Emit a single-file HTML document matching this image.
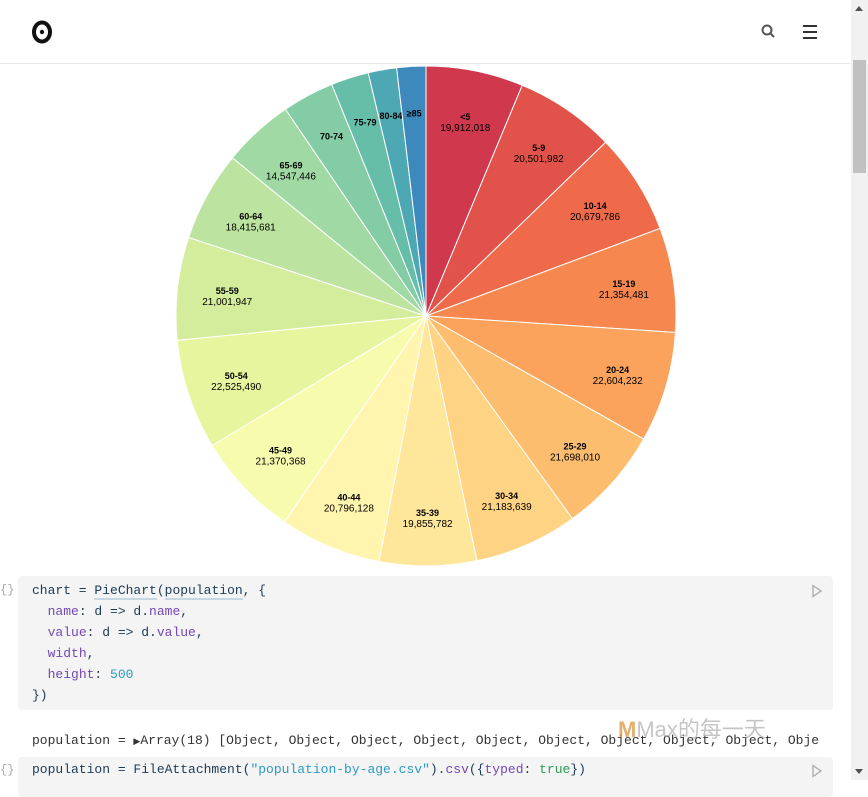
<!DOCTYPE html>
<html><head><meta charset="utf-8">
<style>
body{margin:0;width:868px;height:780px;overflow:hidden;background:#fff;font-family:"Liberation Sans",sans-serif;position:relative}
.hdr{position:absolute;left:0;top:0;width:851px;height:63px;border-bottom:1px solid #e8e8e8;background:#fff}
.sb{position:absolute;right:0;top:0;width:17px;height:780px;background:#f1f1f1}
.thumb{position:absolute;left:2px;top:60px;width:13px;height:113px;background:#c1c1c1}
.code{font-family:"Liberation Mono",monospace;font-size:13px;color:#1a3a57}
.cell{position:absolute;left:18px;width:815px;background:#f4f4f4;border-radius:4px}
.ln{position:absolute;left:32px;white-space:pre}
.p{color:#7248b5}.n{color:#2a9bc4}.s{color:#2a9bc4}.g{color:#2e9a58}
.u{border-bottom:2px solid #c5d7e3}
.br{position:absolute;left:0;color:#aaa;font-size:12px;font-family:"Liberation Mono",monospace}
</style></head><body>
<div class="hdr">
<svg width="851" height="63" style="position:absolute;left:0;top:0">
<ellipse cx="42" cy="32" rx="8" ry="9.5" fill="none" stroke="#111" stroke-width="4"/>
<circle cx="42" cy="32" r="2.2" fill="#111"/>
<circle cx="767" cy="30" r="4.5" fill="none" stroke="#555" stroke-width="2"/>
<line x1="770" y1="33" x2="774" y2="37" stroke="#555" stroke-width="2"/>
<rect x="803" y="25" width="14" height="2" fill="#333"/><rect x="803" y="31" width="14" height="2" fill="#333"/><rect x="803" y="37" width="14" height="2" fill="#333"/>
</svg></div>
<svg id="pie" width="851" height="570" style="position:absolute;left:0;top:0"></svg>
<div class="sb"><div style="position:absolute;left:4px;top:6px;border:4px solid transparent;border-bottom:5px solid #505050;border-top:0"></div><div class="thumb"></div><div style="position:absolute;left:4px;bottom:6px;border:4px solid transparent;border-top:5px solid #505050;border-bottom:0"></div></div>
<div class="code">
<div class="cell" style="top:576px;height:134px"></div>
<div class="br" style="top:583px">{}</div>
<svg style="position:absolute;left:810px;top:584px" width="14" height="14"><path d="M3 1.5 L11 7 L3 12.5 Z" fill="none" stroke="#aaa" stroke-width="1.3"/></svg>
<div class="ln" style="top:583px">chart = <span class="u">PieChart</span>(<span class="u">population</span>, {</div>
<div class="ln" style="top:604px">  <span class="p">name</span>: d =&gt; d.<span class="p">name</span>,</div>
<div class="ln" style="top:625px">  <span class="p">value</span>: d =&gt; d.<span class="p">value</span>,</div>
<div class="ln" style="top:646px">  <span class="p">width</span>,</div>
<div class="ln" style="top:667px">  <span class="p">height</span>: <span class="n">500</span></div>
<div class="ln" style="top:688px">})</div>
<div class="ln" style="top:733px;color:#333;width:788px;overflow:hidden">population = <span style="font-size:9px">▶</span>Array(18) [Object, Object, Object, Object, Object, Object, Object, Object, Object, Object</div>
<div class="cell" style="top:757px;height:40px"></div>
<div class="br" style="top:763px">{}</div>
<svg style="position:absolute;left:810px;top:764px" width="14" height="14"><path d="M3 1.5 L11 7 L3 12.5 Z" fill="none" stroke="#aaa" stroke-width="1.3"/></svg>
<div class="ln" style="top:762px">population = FileAttachment(<span class="s">"population-by-age.csv"</span>).<span class="p">csv</span>({<span class="p">typed</span>: <span class="g">true</span>})</div>
</div>
<div style="position:absolute;left:618px;top:712px;font-size:22px;color:rgba(150,150,150,.55);font-family:'Liberation Sans','Noto Sans CJK SC',sans-serif">
<span style="color:rgba(220,150,60,.75);font-weight:bold">M</span>Max的每一天</div>
<script>
var d=[["<5",19912018],["5-9",20501982],["10-14",20679786],["15-19",21354481],["20-24",22604232],["25-29",21698010],["30-34",21183639],["35-39",19855782],["40-44",20796128],["45-49",21370368],["50-54",22525490],["55-59",21001947],["60-64",18415681],["65-69",14547446],["70-74",10587721],["75-79",7730129],["80-84",5811429],["≥85",5938752]];
var c=["#d0384e","#e1524a","#ee6a4b","#f6884f","#fba35c","#fdbd6e","#fed383","#fee79a","#fff5ae","#f7fbae","#e8f59f","#d3ed9c","#bce4a0","#a0d9a4","#83cca5","#66bea9","#4ea8b4","#3e89bc"];
var tot=d.reduce((a,b)=>a+b[1],0),cx=426,cy=316,R=250,LR=200,a0=0,s="";
d.forEach(function(e,i){var a1=a0+e[1]/tot*2*Math.PI;
var x0=cx+R*Math.sin(a0),y0=cy-R*Math.cos(a0),x1=cx+R*Math.sin(a1),y1=cy-R*Math.cos(a1);
s+='<path d="M'+cx+' '+cy+'L'+x0+' '+y0+'A250 250 0 0 1 '+x1+' '+y1+'Z" fill="'+c[i]+'" stroke="#fff" stroke-width="1"/>';
var m=(a0+a1)/2,lx=cx+LR*Math.sin(m),ly=cy-LR*Math.cos(m);
s+='<text x="'+lx+'" y="'+ly+'" text-anchor="middle" font-size="10" font-family="Liberation Sans,sans-serif" fill="#000"><tspan x="'+lx+'" font-weight="bold" font-size="9">'+e[0].replace("<","&lt;")+'</tspan>';
if(a1-a0>0.25)s+='<tspan x="'+lx+'" dy="1.1em">'+e[1].toLocaleString("en-US")+'</tspan>';
s+='</text>';a0=a1;});
document.getElementById("pie").innerHTML=s;
</script>
</body></html>
